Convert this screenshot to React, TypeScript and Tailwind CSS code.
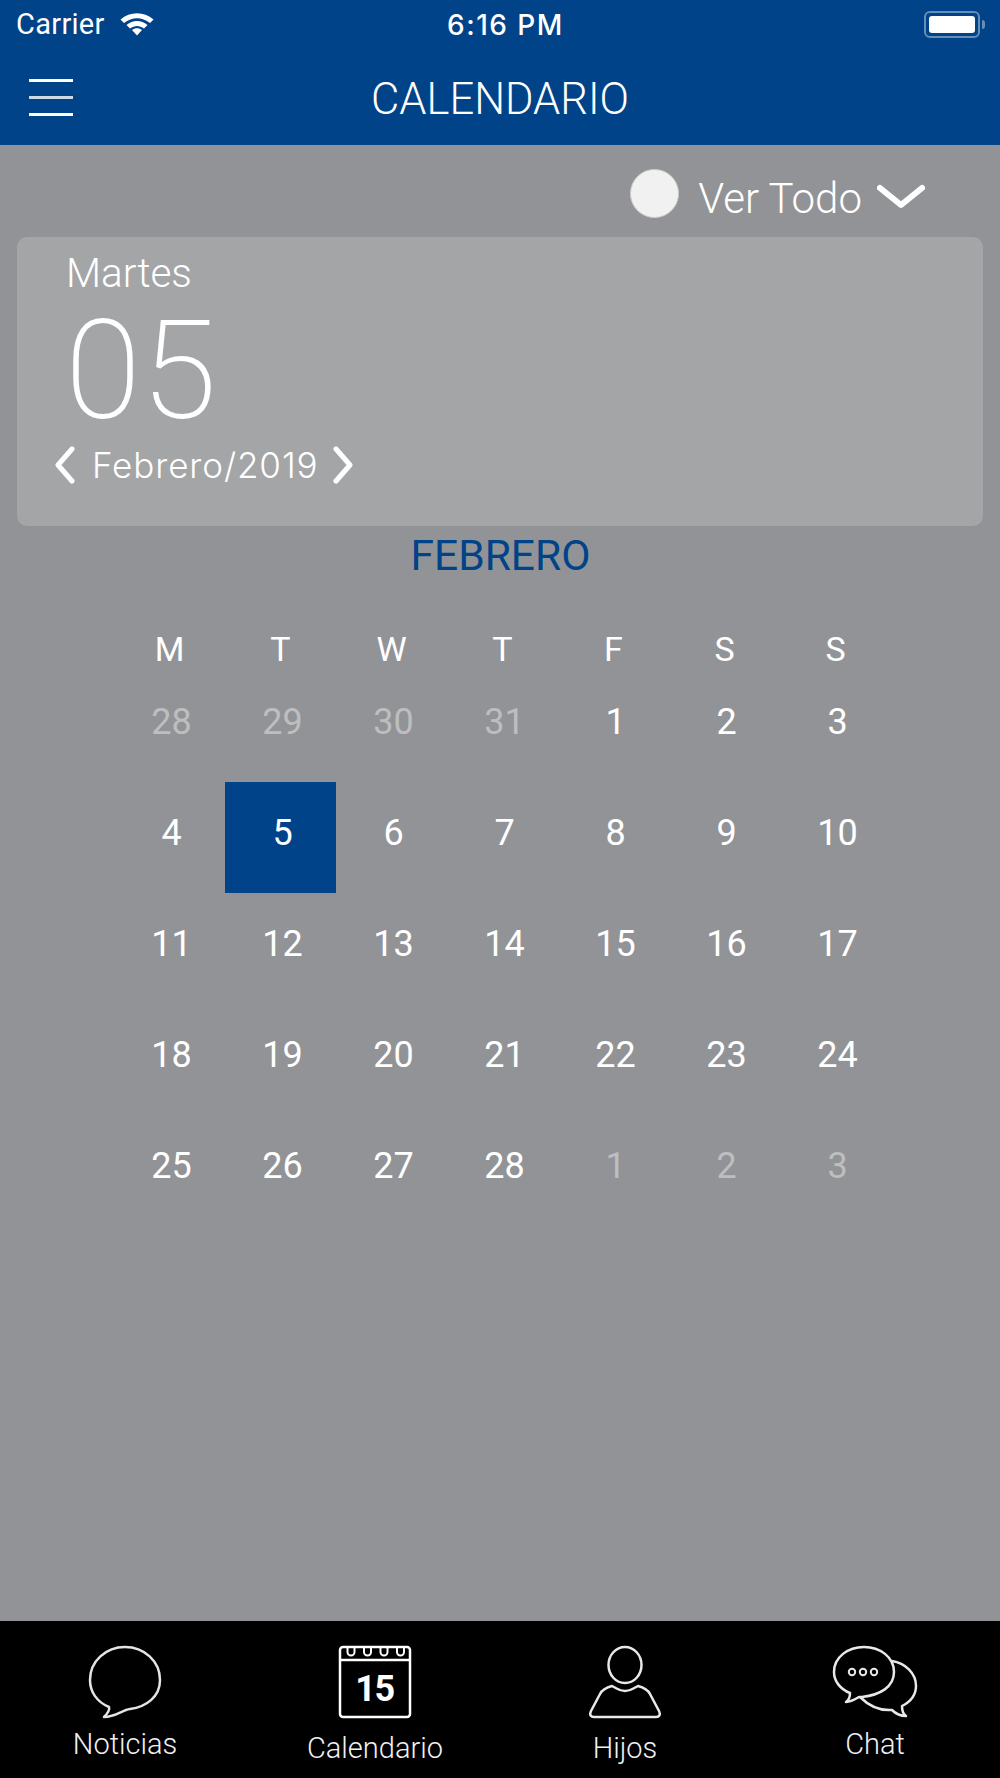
const BLUE = "bg-[#004388]";

const weekDays = ["M", "T", "W", "T", "F", "S", "S"];

const days: { n: number; muted?: boolean; selected?: boolean }[] = [
  { n: 28, muted: true },
  { n: 29, muted: true },
  { n: 30, muted: true },
  { n: 31, muted: true },
  { n: 1 },
  { n: 2 },
  { n: 3 },
  { n: 4 },
  { n: 5, selected: true },
  ...Array.from({ length: 23 }, (_, i) => ({ n: i + 6 })),
  { n: 1, muted: true },
  { n: 2, muted: true },
  { n: 3, muted: true },
];

const StatusBar = () => (
  <div className="h-[50px] relative flex items-center justify-between pl-4 pr-[15px] text-white font-['Inter',sans-serif]">
    <div className="flex items-center gap-[14px]">
      <span className="text-[29px] tracking-[0.3px] font-['Roboto',sans-serif]">Carrier</span>
      <svg width="36" height="25" viewBox="0 0 36 25" className="-mt-[3px]">
        <path d="M1.5 8.5 C11 0 25 0 34.5 8.5 L31 12 C23 5.5 13 5.5 5 12 Z" fill="white" />
        <path d="M7.5 14 C14 8.5 22 8.5 28.5 14 L25 17.5 C20.5 14 15.5 14 11 17.5 Z" fill="white" />
        <path d="M13 19 C16 16.8 20 16.8 23 19 L18 24.5 Z" fill="white" />
      </svg>
    </div>
    <span className="absolute left-[447px] top-[8px] text-[28px] font-medium tracking-[1.5px] leading-[34px]">6:16 PM</span>
    <div className="flex items-center gap-[2px] -mt-[2px]">
      <div className="w-[56px] h-[27px] rounded-[6px] border-2 border-white/40 p-[3px]">
        <div className="w-full h-full bg-white rounded-[3px]" />
      </div>
      <div className="w-[3px] h-[9px] bg-white/40 rounded-r-[3px]" />
    </div>
  </div>
);

const NavBar = () => (
  <div className="h-[95px] relative flex items-center justify-center">
    <div className="absolute left-[29px] top-[29px] w-[44px] flex flex-col gap-[14px]">
      <div className="h-[3px] bg-white" />
      <div className="h-[3px] bg-white/80" />
      <div className="h-[3px] bg-white" />
    </div>
    <span className="text-white text-[43.5px] font-light mt-[4px]">CALENDARIO</span>
  </div>
);

const Filter = () => (
  <div className="h-[92px] flex items-center justify-end pr-[75px] text-white">
    <div className="w-[49px] h-[49px] rounded-full bg-[#f1f1f1] border border-[#cfcfcf] mt-[5px]" />
    <span className="text-[42px] font-light ml-[19px] mt-[14px]">Ver Todo</span>
    <svg width="48" height="28" viewBox="0 0 48 28" className="ml-[15px] mt-[12px]">
      <path d="M3 5 L24 22 L45 5" fill="none" stroke="white" strokeWidth="6" strokeLinecap="round" strokeLinejoin="round" />
    </svg>
  </div>
);

const DateCard = () => (
  <div className="mx-[17px] h-[289px] rounded-[10px] bg-[#a4a5a7] text-white flex flex-col">
    <span className="ml-[49px] mt-[13px] text-[40.5px] font-light leading-[47px]">Martes</span>
    <span className="ml-[48px] mt-[15px] text-[138px] font-extralight leading-[118px]">05</span>
    <div className="flex items-center ml-[37px] mt-[16px]">
      <svg width="22" height="38" viewBox="0 0 22 38">
        <path d="M18 3 L4 19 L18 35" fill="none" stroke="white" strokeWidth="5" strokeLinecap="round" strokeLinejoin="round" />
      </svg>
      <span className="ml-[16px] text-[35px] font-light font-['Inter',sans-serif] tracking-[0.9px] leading-[38px]">Febrero/2019</span>
      <svg width="22" height="38" viewBox="0 0 22 38" className="ml-[13px]">
        <path d="M4 3 L18 19 L4 35" fill="none" stroke="white" strokeWidth="5" strokeLinecap="round" strokeLinejoin="round" />
      </svg>
    </div>
  </div>
);

const Calendar = () => (
  <div className="flex flex-col items-center">
    <span className="text-[42.5px] text-[#004388] leading-[45px] mt-[7px] pl-[1px]">FEBRERO</span>
    <div className="grid grid-cols-[repeat(7,111px)] mt-[52px] pl-[5px]">
      {weekDays.map((d, i) => (
        <span key={i} className="h-[41px] text-center text-white text-[34px] leading-[38px]">
          {d}
        </span>
      ))}
      {days.map((d, i) => (
        <div
          key={i}
          className={`h-[111px] flex justify-center pt-[31px] pl-[4px] text-[36px] leading-[40px] ${
            d.selected ? BLUE + " text-white" : d.muted ? "text-[#bdbec0]" : "text-white"
          }`}
        >
          {d.n}
        </div>
      ))}
    </div>
  </div>
);

const NoticiasIcon = () => (
  <svg width="74" height="74" viewBox="0 0 74 74">
    <path
      d="M37 2 C56 2 72 16 72 35 C72 52 58 62 42 64 C34 65 28 72 16 72 C20 68 22 65 21 62 C9 57 2 47 2 35 C2 16 18 2 37 2 Z"
      fill="none"
      stroke="#e4e4e4"
      strokeWidth="2.5"
      strokeLinejoin="round"
    />
  </svg>
);

const CalendarioIcon = () => (
  <svg width="74" height="74" viewBox="0 0 74 74">
    <rect x="2" y="2" width="70" height="70" rx="3" fill="none" stroke="white" strokeWidth="2.5" />
    <path d="M2 15 H72" stroke="white" strokeWidth="2.5" />
    <path d="M9.5 2 V7 a3.5 3.5 0 0 0 7 0 V2 M26 2 V7 a3.5 3.5 0 0 0 7 0 V2 M42.5 2 V7 a3.5 3.5 0 0 0 7 0 V2 M59 2 V7 a3.5 3.5 0 0 0 7 0 V2" fill="none" stroke="white" strokeWidth="2" />
    <text x="36.5" y="56" textAnchor="middle" fill="white" fontSize="36" fontWeight="700" letterSpacing="-1.5" fontFamily="Roboto, sans-serif">
      15
    </text>
  </svg>
);

const HijosIcon = () => (
  <svg width="74" height="74" viewBox="0 0 74 74">
    <ellipse cx="37" cy="20" rx="16.5" ry="18" fill="none" stroke="#e8e8e8" strokeWidth="2.5" />
    <path
      d="M24 41 C30 44 31 46 37 46 C43 46 44 44 50 41 C54 42 60 45 62 49 L71 66 C73 70 71 72 68 72 H6 C3 72 1 70 3 66 L12 49 C14 45 20 42 24 41 Z"
      fill="none"
      stroke="#e8e8e8"
      strokeWidth="2.5"
      strokeLinejoin="round"
    />
  </svg>
);

const ChatIcon = () => (
  <svg width="86" height="74" viewBox="0 0 86 74">
    <path
      d="M32 2 C48 2 62 12 62 27 C62 42 48 50 30 52 L27 52 C22 55 18 57 14 57 C17 55 18 52 18 48 C8 44 2 36 2 27 C2 12 16 2 32 2 Z"
      fill="none"
      stroke="#e8e8e8"
      strokeWidth="2.5"
      strokeLinejoin="round"
    />
    <path
      d="M60 16 C73 18 84 28 84 41 C84 50 78 57 70 61 C70 65 71 69 74 71 C68 71 63 68 60 65 C46 66 36 60 28 52"
      fill="none"
      stroke="#e8e8e8"
      strokeWidth="2.5"
      strokeLinejoin="round"
    />
    <circle cx="20" cy="27" r="3.2" fill="none" stroke="#e8e8e8" strokeWidth="2" />
    <circle cx="31" cy="27" r="3.2" fill="none" stroke="#e8e8e8" strokeWidth="2" />
    <circle cx="42" cy="27" r="3.2" fill="none" stroke="#e8e8e8" strokeWidth="2" />
  </svg>
);

const tabs = [
  { label: "Noticias", icon: <NoticiasIcon />, pad: "mt-[8px]" },
  { label: "Calendario", icon: <CalendarioIcon />, pad: "mt-[12px]" },
  { label: "Hijos", icon: <HijosIcon />, pad: "mt-[12px]" },
  { label: "Chat", icon: <ChatIcon />, pad: "mt-[8px]" },
];

const TabBar = () => (
  <div className="h-[157px] bg-black grid grid-cols-4 pt-[24px]">
    {tabs.map((t) => (
      <div key={t.label} className="flex flex-col items-center">
        {t.icon}
        <span className={`text-[29px] font-light text-[#f0f0f0] leading-[34px] ${t.pad}`}>{t.label}</span>
      </div>
    ))}
  </div>
);

export default function App() {
  return (
    <div className="w-[1000px] h-[1778px] bg-[#929396] flex flex-col font-['Roboto',sans-serif] overflow-hidden">
      <div className={BLUE}>
        <StatusBar />
        <NavBar />
      </div>
      <Filter />
      <DateCard />
      <div className="flex-1">
        <Calendar />
      </div>
      <TabBar />
    </div>
  );
}
